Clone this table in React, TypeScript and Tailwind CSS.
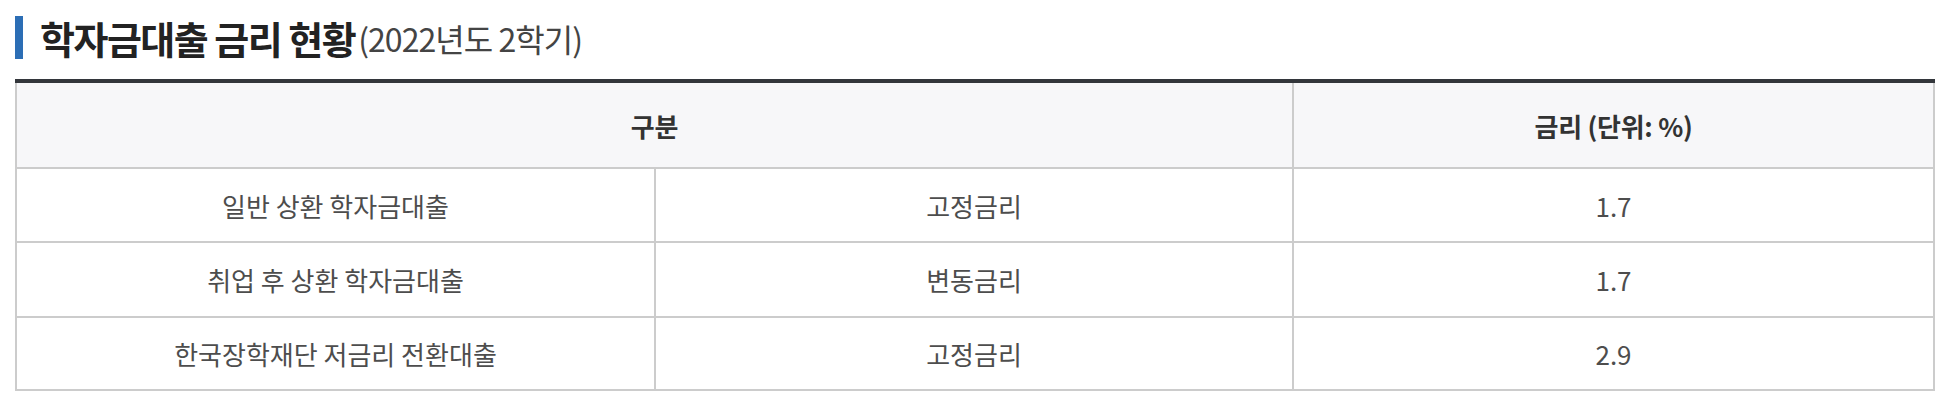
const ROWS = [
  { name: "일반 상환 학자금대출", type: "고정금리", rate: "1.7", h: "h-[74px]" },
  { name: "취업 후 상환 학자금대출", type: "변동금리", rate: "1.7", h: "h-[75px]" },
  { name: "한국장학재단 저금리 전환대출", type: "고정금리", rate: "2.9", h: "h-[73px]" },
];

const cell =
  "flex items-center justify-center border-r-2 border-b-2 border-[#cccccc] text-[26px] text-[#4d4d4d]";

export default function App() {
  return (
    <div
      className="w-[1948px] h-[408px] bg-white pt-[16px]"
      style={{ fontFamily: '"Noto Sans CJK KR", "Noto Sans", sans-serif' }}
    >
      <h2 className="ml-[15px] flex h-[43px] items-center">
        <span className="h-[43px] w-[8px] bg-[#2c6eb5]" />
        <span className="ml-[17px] text-[38px] font-bold tracking-[-0.04em] text-[#222222]">
          학자금대출 금리 현황
        </span>
        <span className="ml-[3px] text-[32px] font-normal tracking-[-0.03em] text-[#444444]">
          (2022년도 2학기)
        </span>
      </h2>

      <div className="ml-[15px] mt-[20px] w-[1920px] border-t-4 border-[#33363b]">
        <div className="grid grid-cols-[639px_638px_641px] border-l-2 border-[#cccccc]">
          <div className={`${cell} col-span-2 h-[86px] bg-[#f7f7f9] font-bold text-[#333333] tracking-[-0.01em]`}>
            구분
          </div>
          <div className={`${cell} h-[86px] bg-[#f7f7f9] font-bold text-[#333333] tracking-[-0.01em]`}>
            금리 (단위: %)
          </div>
          {ROWS.map((r) => (
            <div key={r.name} className="contents">
              <div className={`${cell} ${r.h}`}>{r.name}</div>
              <div className={`${cell} ${r.h}`}>{r.type}</div>
              <div className={`${cell} ${r.h}`}>{r.rate}</div>
            </div>
          ))}
        </div>
      </div>
    </div>
  );
}
